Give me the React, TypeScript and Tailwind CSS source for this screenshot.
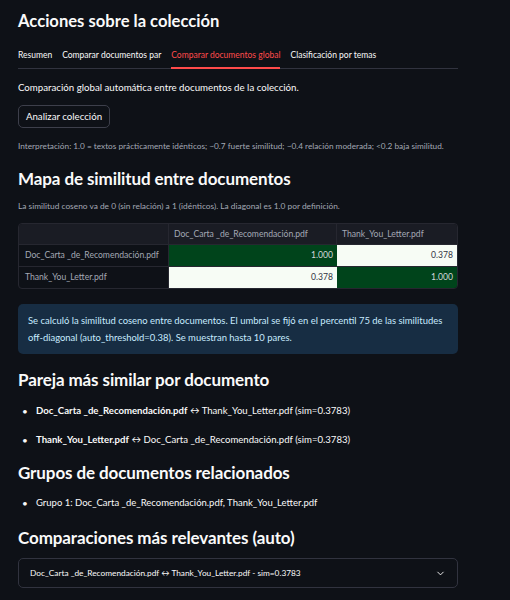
import React from "react";
import { ChevronDown } from "lucide-react";

const font = { fontFamily: '"Lato", "Noto Sans", sans-serif' };

function H2({ children, className = "" }: { children: React.ReactNode; className?: string }) {
  return (
    <div className={`h-[26px] flex items-center text-[17px] font-bold text-[#fafafa] tracking-[-0.1px] whitespace-nowrap ${className}`}>
      {children}
    </div>
  );
}

export default function App() {
  const tabs = ["Resumen", "Comparar documentos par", "Comparar documentos global", "Clasificación por temas"];
  return (
    <div className="w-[510px] h-[600px] bg-[#0e1117] overflow-hidden" style={font}>
      <div className="w-[440px] ml-[18px] flex flex-col">
        <div className="h-[42px] flex items-center text-[16.6px] font-bold text-[#fafafa] whitespace-nowrap">
          Acciones sobre la colección
        </div>
        <div className="mt-[2px] flex gap-[10px] border-b border-[#31333f] h-[25px]">
          {tabs.map((t, i) => (
            <div
              key={t}
              className={`h-[25px] flex items-center text-[8.5px] mb-[-1px] whitespace-nowrap ${
                i === 2 ? "text-[#ff4b4b] border-b-2 border-[#ff4b4b]" : "text-[#fafafa] border-b-2 border-transparent"
              }`}
            >
              {t}
            </div>
          ))}
        </div>
        <div className="mt-[9px] h-[18px] flex items-center text-[9.7px] text-[#fafafa] whitespace-nowrap">
          Comparación global automática entre documentos de la colección.
        </div>
        <div className="mt-[9px] w-[92px] h-[23px] rounded-[5px] border border-[#3d3f4b] flex items-center justify-center text-[9.7px] text-[#fafafa]">
          Analizar colección
        </div>
        <div className="mt-[10px] h-[16px] flex items-center text-[8.25px] text-[#a3a8b4] whitespace-nowrap">
          Interpretación: 1.0 = textos prácticamente idénticos; ~0.7 fuerte similitud; ~0.4 relación moderada; &lt;0.2 baja similitud.
        </div>
        <H2 className="mt-[12px]">Mapa de similitud entre documentos</H2>
        <div className="mt-[7px] h-[14px] flex items-center text-[8.35px] text-[#a3a8b4] whitespace-nowrap">
          La similitud coseno va de 0 (sin relación) a 1 (idénticos). La diagonal es 1.0 por definición.
        </div>
        <div className="mt-[10px] rounded-[4px] border border-[#262730] overflow-hidden text-[8.6px]">
          <div className="flex h-[21px] bg-[#1a1c24] border-b border-[#262730] text-[#a3a8b4]">
            <div className="w-[150px] border-r border-[#262730]"></div>
            <div className="w-[168px] border-r border-[#262730] flex items-center px-[5px]">Doc_Carta _de_Recomendación.pdf</div>
            <div className="flex-1 flex items-center px-[5px]">Thank_You_Letter.pdf</div>
          </div>
          <div className="flex h-[22px] border-b border-[#262730]">
            <div className="w-[150px] border-r border-[#262730] flex items-center px-[6px] text-[#a3a8b4]">Doc_Carta _de_Recomendación.pdf</div>
            <div className="w-[168px] bg-[#00441b] flex items-center justify-end px-[4px] text-[#d5d7db]">1.000</div>
            <div className="flex-1 bg-[#f7fcf5] flex items-center justify-end px-[4px] text-[#31333f]">0.378</div>
          </div>
          <div className="flex h-[21px]">
            <div className="w-[150px] border-r border-[#262730] flex items-center px-[6px] text-[#a3a8b4]">Thank_You_Letter.pdf</div>
            <div className="w-[168px] bg-[#f7fcf5] flex items-center justify-end px-[4px] text-[#31333f]">0.378</div>
            <div className="flex-1 bg-[#00441b] flex items-center justify-end px-[4px] text-[#d5d7db]">1.000</div>
          </div>
        </div>
        <div className="mt-[15px] h-[50px] rounded-[5px] bg-[#172d43] px-[10px] flex flex-col justify-center text-[9.45px] leading-[17px] text-[#c7ebff] whitespace-nowrap">
          <div>Se calculó la similitud coseno entre documentos. El umbral se fijó en el percentil 75 de las similitudes</div>
          <div>off-diagonal (auto_threshold=0.38). Se muestran hasta 10 pares.</div>
        </div>
        <H2 className="mt-[13px]">Pareja más similar por documento</H2>
        <ul className="mt-[10px] flex flex-col gap-[13px] text-[9.6px] text-[#fafafa]">
          <li className="h-[16px] flex items-center whitespace-nowrap">
            <span className="w-[18px] pl-[4px] text-[10px]">•</span>
            <span><b>Doc_Carta _de_Recomendación.pdf</b> ↔ Thank_You_Letter.pdf (sim=0.3783)</span>
          </li>
          <li className="h-[16px] flex items-center whitespace-nowrap">
            <span className="w-[18px] pl-[4px] text-[10px]">•</span>
            <span><b>Thank_You_Letter.pdf</b> ↔ Doc_Carta _de_Recomendación.pdf (sim=0.3783)</span>
          </li>
        </ul>
        <H2 className="mt-[12px]">Grupos de documentos relacionados</H2>
        <ul className="mt-[9px] text-[9.5px] text-[#fafafa]">
          <li className="h-[16px] flex items-center whitespace-nowrap">
            <span className="w-[18px] pl-[4px] text-[10px]">•</span>
            <span>Grupo 1: Doc_Carta _de_Recomendación.pdf, Thank_You_Letter.pdf</span>
          </li>
        </ul>
        <H2 className="mt-[14px]">Comparaciones más relevantes (auto)</H2>
        <div className="mt-[7px] h-[30px] rounded-[5px] border border-[#31333f] flex items-center justify-between pl-[11px] pr-[11px] text-[8.3px] text-[#fafafa] whitespace-nowrap">
          <span>Doc_Carta _de_Recomendación.pdf ↔ Thank_You_Letter.pdf - sim=0.3783</span>
          <ChevronDown size={11} strokeWidth={2} className="text-[#fafafa]" />
        </div>
      </div>
    </div>
  );
}
